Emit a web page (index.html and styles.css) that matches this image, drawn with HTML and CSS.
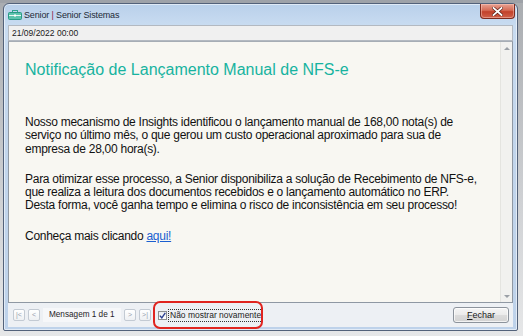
FILE: index.html
```html
<!DOCTYPE html>
<html lang="pt-BR">
<head>
<meta charset="utf-8">
<title>Senior | Senior Sistemas</title>
<link rel="stylesheet" href="styles.css">
</head>
<body>
<div class="window">
  <div class="titlebar">
    <svg class="app-icon" width="14" height="10" viewBox="0 0 14 10">
      <rect x="4.5" y="0.5" width="5" height="2.5" fill="none" stroke="#2fa58f" stroke-width="1"/>
      <rect x="0.5" y="2.5" width="13" height="7" rx="1" fill="#5cc3ad" stroke="#2a9a85" stroke-width="1"/>
      <rect x="1" y="5" width="12" height="1" fill="#e8f7f2"/>
      <rect x="6" y="4.5" width="2" height="2" fill="#ffffff"/>
    </svg>
    <span class="title">Senior <span class="pipe">|</span> Senior Sistemas</span>
    <div class="close">
      <svg width="11" height="9" viewBox="0 0 11 9">
        <path d="M1.5 1 L9.5 8 M9.5 1 L1.5 8" stroke="#5a1d14" stroke-width="3.2" stroke-linecap="square"/>
        <path d="M1.5 1 L9.5 8 M9.5 1 L1.5 8" stroke="#ffffff" stroke-width="1.8" stroke-linecap="square"/>
      </svg>
    </div>
  </div>
  <div class="datebar">21/09/2022 00:00</div>
  <div class="content">
    <div class="message">
      <h1>Notificação de Lançamento Manual de NFS-e</h1>
      <p>Nosso mecanismo de Insights identificou o lançamento manual de 168,00 nota(s) de<br>serviço no último mês, o que gerou um custo operacional aproximado para sua de<br>empresa de 28,00 hora(s).</p>
      <p>Para otimizar esse processo, a Senior disponibiliza a solução de Recebimento de NFS-e,<br>que realiza a leitura dos documentos recebidos e o lançamento automático no ERP.<br>Desta forma, você ganha tempo e elimina o risco de inconsistência em seu processo!</p>
      <p>Conheça mais clicando <a href="#">aqui!</a></p>
    </div>
    <div class="scrollbar">
      <span class="arrow-up"></span>
      <span class="arrow-down"></span>
    </div>
  </div>
  <div class="footer">
    <div class="nav">
      <span class="navbtn">|&lt;</span>
      <span class="navbtn">&lt;</span>
      <span class="counter">Mensagem 1 de 1</span>
      <span class="navbtn">&gt;</span>
      <span class="navbtn">&gt;|</span>
    </div>
    <label class="dontshow">
      <span class="checkbox">
        <svg width="7" height="7" viewBox="0 0 7 7"><path d="M0.8 3.6 L2.8 5.8 L6.3 0.8" fill="none" stroke="#2b3f8f" stroke-width="1.4"/></svg>
      </span>
      <span class="dontshow-text">Não mostrar novamente</span>
    </label>
    <span class="fechar"><u>F</u>echar</span>
  </div>
  <div class="highlight"></div>
</div>
</body>
</html>
```
FILE: styles.css
```css
html, body {
  margin: 0;
  padding: 0;
}
body {
  width: 523px;
  height: 336px;
  overflow: hidden;
  box-sizing: border-box;
  padding: 3px 5px 0 3px;
  font-family: "Liberation Sans", Arial, sans-serif;
  background:
    linear-gradient(to bottom, #9ea2a8 0, #9ea2a8 3px, transparent 3px),
    linear-gradient(to bottom, #a9acb0, #cfd1d4 60%, #e6e7e8);
}

.window {
  position: relative;
  box-sizing: border-box;
  height: 328px;
  border: 1px solid #53627a;
  border-radius: 6px 6px 2px 2px;
  background: linear-gradient(to bottom, #b9d0ea 0, #c9dcf1 22px, #c3d6ec 120px, #bed2ea 100%);
  box-shadow: inset 0 0 0 1px rgba(255, 255, 255, 0.55);
  padding: 0 4px 3px 4px;
  display: flex;
  flex-direction: column;
}

.titlebar {
  height: 21px;
  display: flex;
  align-items: center;
}
.app-icon {
  flex: none;
  margin-top: 1px;
}
.title {
  margin-left: 2px;
  font-size: 9px;
  letter-spacing: -0.15px;
  color: #1e2a36;
  margin-top: 1px;
}
.pipe {
  color: #8a1c46;
}
.close {
  margin-left: auto;
  margin-right: -2px;
  align-self: flex-start;
  width: 35px;
  height: 15px;
  box-sizing: border-box;
  border: 1px solid #7d2a1e;
  border-top: none;
  border-radius: 0 0 4px 4px;
  background: linear-gradient(to bottom, #e8a293 0, #d56b55 45%, #c2412b 55%, #d0614a 100%);
  box-shadow: inset 0 0 0 1px rgba(255, 210, 200, 0.45);
  display: flex;
  align-items: center;
  justify-content: center;
}

.datebar {
  height: 16px;
  box-sizing: border-box;
  border: 1px solid #b3b9c1;
  background: #f0f0f0;
  font-size: 8.5px;
  line-height: 14px;
  padding-left: 3px;
  color: #1a1a1a;
}

.content {
  flex: 1;
  display: flex;
  background: #f8f7f2;
  border: 1px solid #8f98a3;
  border-top-color: #a6adb5;
  min-height: 0;
}
.message {
  flex: 1;
  padding: 19px 0 0 16px;
  color: #111111;
}
.message h1 {
  margin: 0 0 37px 0;
  font-weight: normal;
  font-size: 16px;
  line-height: 18px;
  color: #17b3a0;
  white-space: nowrap;
}
.message p {
  margin: 0 0 17px 0;
  font-size: 12px;
  line-height: 13.3px;
  letter-spacing: -0.27px;
  white-space: nowrap;
}
.message a {
  color: #1b5fd0;
  text-decoration: underline;
}

.scrollbar {
  width: 11px;
  flex: none;
  background: #f1f1ef;
  border-left: 1px solid #e4e4e0;
  display: flex;
  flex-direction: column;
  justify-content: space-between;
  align-items: center;
  padding: 5px 0 4px 0;
}
.arrow-up {
  width: 0;
  height: 0;
  border-left: 3px solid transparent;
  border-right: 3px solid transparent;
  border-bottom: 3px solid #9a9fa6;
}
.arrow-down {
  width: 0;
  height: 0;
  border-left: 3px solid transparent;
  border-right: 3px solid transparent;
  border-top: 3px solid #9a9fa6;
}

.footer {
  height: 24px;
  flex: none;
  display: flex;
  align-items: center;
  background: #edf0f4;
  padding: 0 4px 0 5px;
}
.nav {
  display: flex;
  align-items: center;
  gap: 3px;
}
.navbtn {
  width: 12px;
  height: 12px;
  box-sizing: border-box;
  border: 1px solid #c3cad3;
  border-radius: 2px;
  background: linear-gradient(to bottom, #ffffff, #eef0f3);
  font-size: 7px;
  line-height: 10px;
  text-align: center;
  color: #97a1ae;
}
.counter {
  width: 78px;
  height: 14px;
  box-sizing: border-box;
  background: #f6f7f9;
  font-size: 8.2px;
  line-height: 14px;
  padding-left: 6px;
  color: #1f2328;
  white-space: nowrap;
  overflow: hidden;
}
.dontshow {
  margin-left: 7px;
  display: flex;
  align-items: center;
}
.checkbox {
  width: 9px;
  height: 9px;
  box-sizing: border-box;
  border: 1px solid #8e8f8f;
  background: linear-gradient(to bottom, #e9ecf0, #ffffff);
  display: flex;
  align-items: center;
  justify-content: center;
}
.dontshow-text {
  margin-left: 1px;
  border: 1px dotted #333333;
  font-size: 8.5px;
  line-height: 11px;
  padding: 0 1px;
  color: #1c1c1c;
  white-space: nowrap;
}
.fechar {
  margin-left: auto;
  width: 56px;
  height: 16px;
  box-sizing: border-box;
  border: 1px solid #8c939c;
  border-radius: 3px;
  background: linear-gradient(to bottom, #f5f5f5 0, #ebebeb 50%, #dcdcdc 51%, #d2d2d2 100%);
  box-shadow: inset 0 0 0 1px rgba(255, 255, 255, 0.7);
  font-size: 9px;
  line-height: 14px;
  text-align: center;
  color: #1a1a1a;
}
.fechar u {
  text-decoration: underline;
}

.highlight {
  position: absolute;
  left: 149px;
  top: 297px;
  width: 110px;
  height: 28px;
  box-sizing: border-box;
  border: 2px solid #e0241f;
  border-radius: 7px;
  pointer-events: none;
}
```
